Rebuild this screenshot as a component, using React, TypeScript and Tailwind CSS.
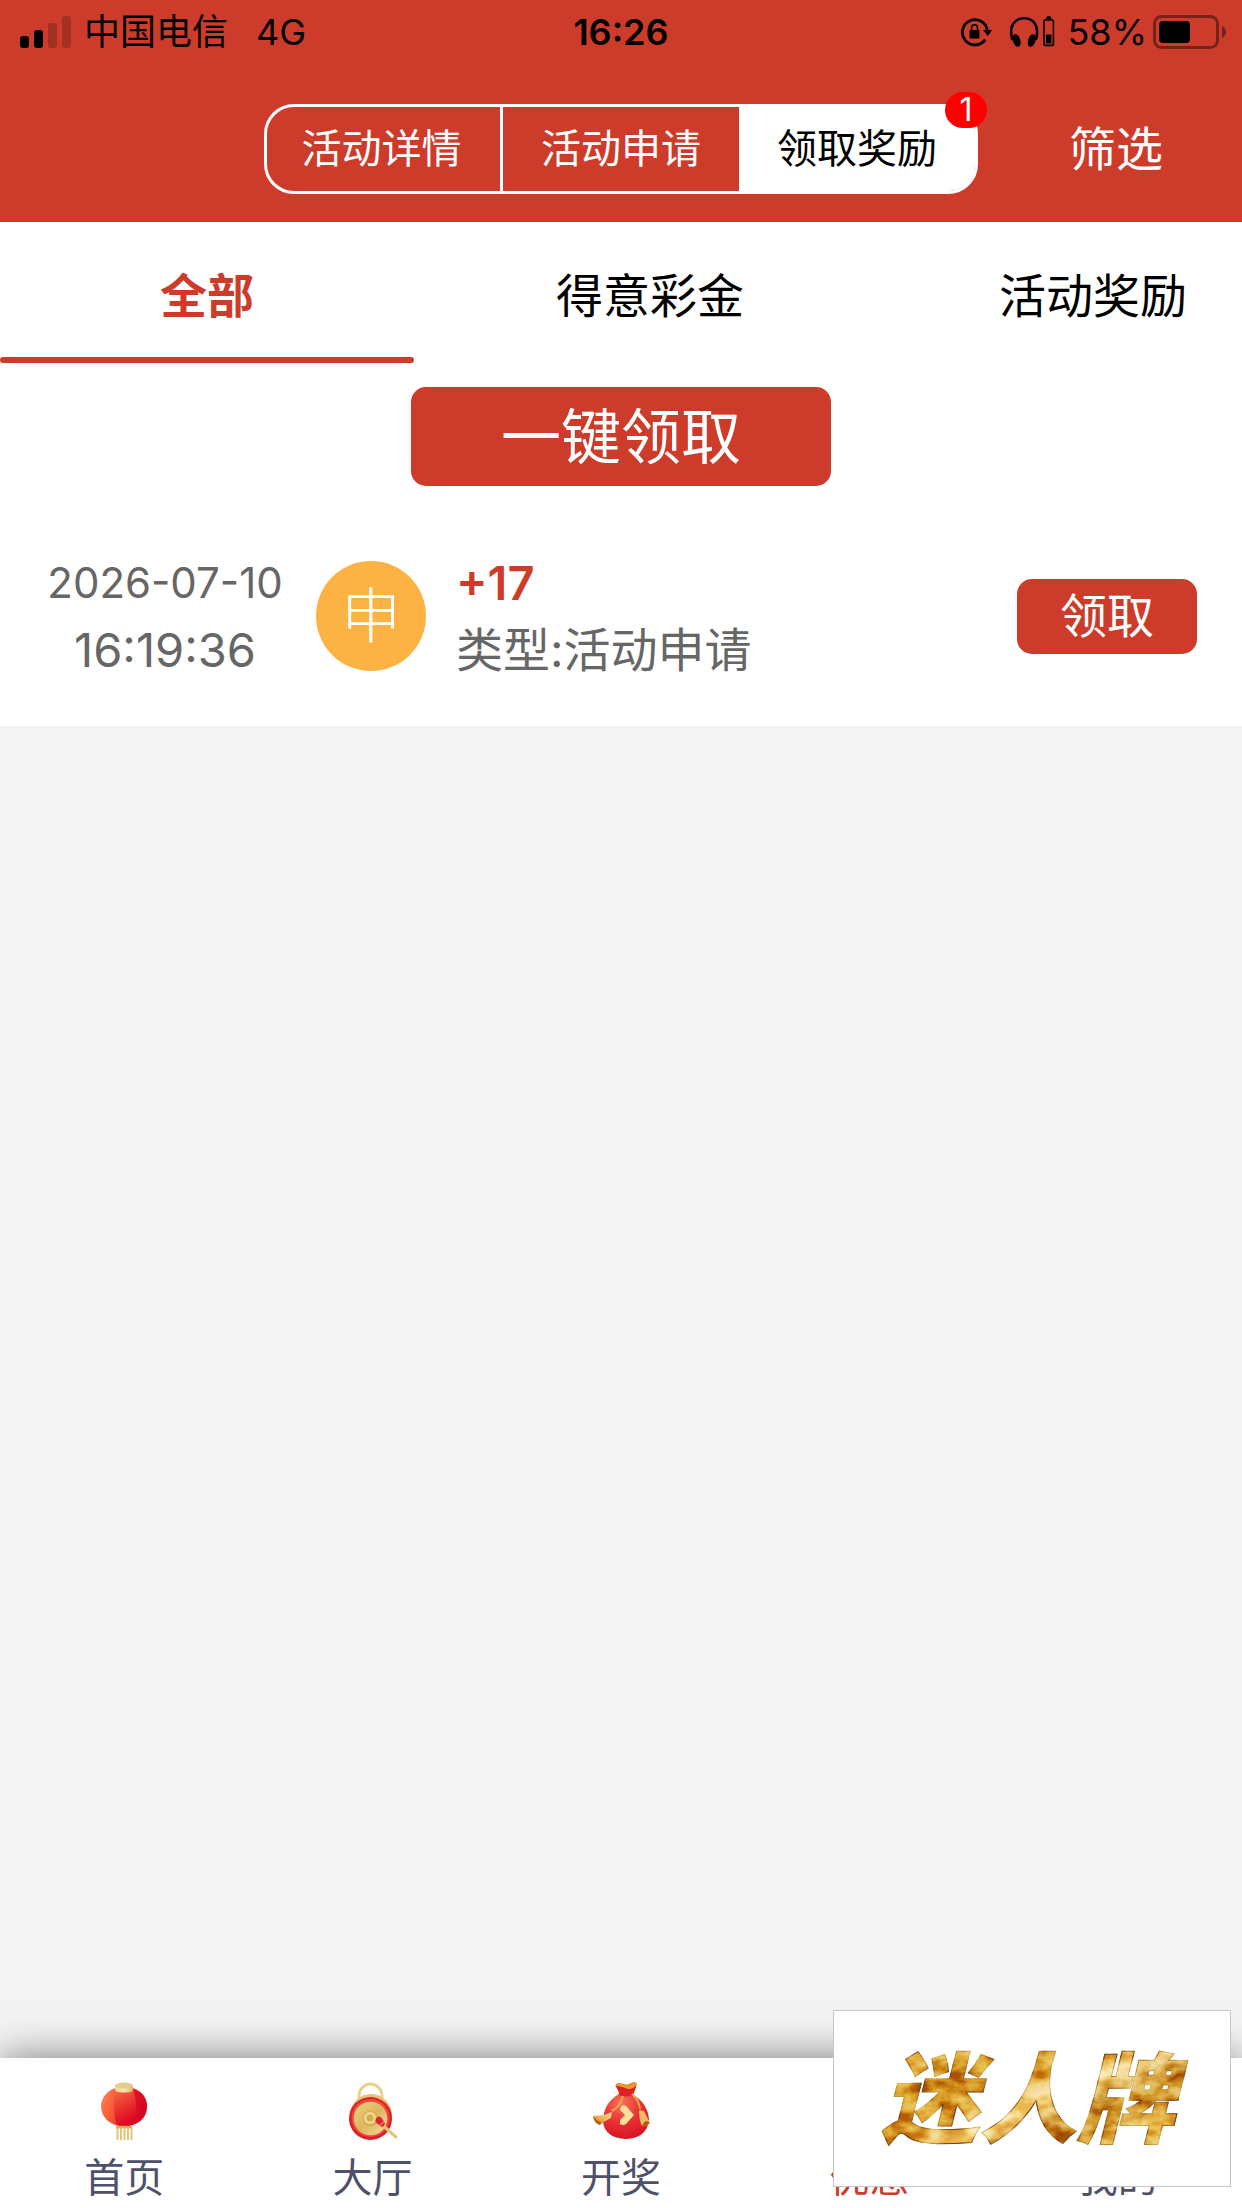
import type { ReactNode } from 'react';

const segments = [
  { label: '活动详情', active: false },
  { label: '活动申请', active: false },
  { label: '领取奖励', active: true, badge: 1 },
];

function SignalIcon() {
  return (
    <svg width="52" height="32" viewBox="0 0 52 32" aria-hidden="true">
      <rect x="0" y="20" width="9" height="12" rx="3" />
      <rect x="14" y="14" width="9" height="18" rx="3" />
      <rect x="28" y="7" width="9" height="25" rx="3" fillOpacity=".2" />
      <rect x="42" y="0" width="9" height="32" rx="3" fillOpacity=".2" />
    </svg>
  );
}

function RotationLockIcon() {
  return (
    <svg width="32" height="30" viewBox="0 0 32 30" aria-hidden="true">
      <path d="M25.2 22.6A12.6 12.6 0 1 1 27.3 13" fill="none" stroke="#000" strokeWidth="2.8" />
      <path d="M23 13h9l-4.2 6z" />
      <rect x="9.5" y="13" width="10" height="8.5" rx="1" />
      <path d="M11.5 14v-3a3 3.2 0 0 1 6 0v3" fill="none" stroke="#000" strokeWidth="1.6" />
    </svg>
  );
}

function HeadphonesIcon() {
  return (
    <svg width="45" height="32" viewBox="0 0 45 32" aria-hidden="true">
      <path d="M2.500 24C-2 10 5 2.300 14.200 2.300S30 10 25.800 24" fill="none" stroke="#000" strokeWidth="2.600" />
      <ellipse cx="6.600" cy="24.500" rx="3.700" ry="6.500" transform="rotate(-17 6.600 24.500)" />
      <ellipse cx="21.800" cy="24.500" rx="3.700" ry="6.500" transform="rotate(17 21.800 24.500)" />
      <path d="M36 3q0-3 2.700-3t2.700 3z" />
      <rect x="34" y="4" width="9.400" height="25.400" rx="1" fill="none" stroke="#000" strokeWidth="1.600" />
      <rect x="36" y="18.500" width="5.400" height="9" />
    </svg>
  );
}

function BatteryIcon() {
  return (
    <svg width="73" height="34" viewBox="0 0 73 34" aria-hidden="true">
      <rect x="1.500" y="1.500" width="63" height="31" rx="7" fill="none" stroke="#000" strokeOpacity=".42" strokeWidth="3" />
      <rect x="6" y="6" width="31" height="22" rx="4" />
      <path d="M69 11q4 2 4 6t-4 6z" fillOpacity=".42" />
    </svg>
  );
}

function LanternIcon() {
  return (
    <svg width="58" height="58" viewBox="0 0 58 58" aria-hidden="true">
      <defs>
        <linearGradient id="lanternBody" x1="0" y1="0" x2="1" y2=".3">
          <stop offset="0" stopColor="#ff8a56" />
          <stop offset=".4" stopColor="#fb5638" />
          <stop offset="1" stopColor="#d4001f" />
        </linearGradient>
        <linearGradient id="lanternMid" x1="0" y1="0" x2=".3" y2="1">
          <stop offset="0" stopColor="#f8703c" />
          <stop offset="1" stopColor="#df0826" />
        </linearGradient>
        <linearGradient id="lanternGold" x1="0" y1="0" x2="1" y2="0">
          <stop offset="0" stopColor="#efd48b" />
          <stop offset=".5" stopColor="#f7e7b4" />
          <stop offset="1" stopColor="#dcb865" />
        </linearGradient>
      </defs>
      <ellipse cx="29" cy="24.500" rx="23" ry="20" fill="url(#lanternBody)" />
      <path d="M21 6h16q4 6 4 18t-4 19H22q-3-7-3-19t2-18z" fill="url(#lanternMid)" />
      <path d="M38 7q3 8 3 17t-4 19q15-4 15-18.500T38 7z" fill="#d90923" fillOpacity=".6" />
      <path d="M20 3v5q0 2.500 9 2.500t9-2.500V3z" fill="url(#lanternGold)" />
      <ellipse cx="29" cy="3.500" rx="9" ry="3" fill="#e3cd8e" />
      <path d="M21 43.500q8 2 16 0v3H21z" fill="#d8ad5c" />
      <path d="M22.500 46v12M26 46v12M29.500 46v12M33 46v12M36.500 46v12" stroke="#e4c476" strokeWidth="2" />
    </svg>
  );
}

function GongIcon() {
  return (
    <svg width="58" height="58" viewBox="0 0 58 58" aria-hidden="true">
      <defs>
        <linearGradient id="gongGold" x1="0" y1="0" x2="1" y2="1">
          <stop offset="0" stopColor="#f0d689" />
          <stop offset=".5" stopColor="#dcb55d" />
          <stop offset="1" stopColor="#f3dfa0" />
        </linearGradient>
      </defs>
      <path d="M15 18V14a11.500 12 0 0 1 23 0v5" fill="none" stroke="#ead08a" strokeWidth="2.800" />
      <circle cx="27" cy="33" r="21" fill="#e6c373" />
      <ellipse cx="26.500" cy="36.500" rx="21.500" ry="21.500" fill="#de1f2b" />
      <circle cx="26.500" cy="36" r="19" fill="#f04a3c" />
      <circle cx="26.500" cy="36.500" r="16.800" fill="url(#gongGold)" />
      <circle cx="26.500" cy="36.500" r="8" fill="#d9b04f" />
      <circle cx="26" cy="36" r="6" fill="#efd98f" />
      <circle cx="26" cy="36" r="3.500" fill="#d5ab4c" />
      <path d="M36 41l16 14" stroke="#e6c675" strokeWidth="3" strokeLinecap="round" />
      <path d="M32 36.500q3-4 6 0l3 5q-1 4-4 3l-5-4q-1-2 0-4z" fill="#dc2530" />
      <path d="M36 43.500l4-4" stroke="#f3dfa0" strokeWidth="1" />
    </svg>
  );
}

function PouchIcon() {
  return (
    <svg width="58" height="58" viewBox="0 0 58 58" aria-hidden="true">
      <defs>
        <radialGradient id="pouchBody" cx=".4" cy=".2" r=".8">
          <stop offset="0" stopColor="#f6755a" />
          <stop offset=".5" stopColor="#e93535" />
          <stop offset="1" stopColor="#d81425" />
        </radialGradient>
        <linearGradient id="tassel" x1="1" y1="0" x2="0" y2="1">
          <stop offset="0" stopColor="#f9dc93" />
          <stop offset=".6" stopColor="#e9aa4a" />
          <stop offset="1" stopColor="#b55a05" />
        </linearGradient>
      </defs>
      <path d="M27 12q-16 9-16 28 2 16 23 17 21-1 23-19-1-17-17-26z" fill="url(#pouchBody)" />
      <path d="M27 13q0-4-3.500-9 1-4 7-2 5 2 9-1 4-2 5 1-1 7-4 11-7 3-13.500 0z" fill="#da2126" />
      <path d="M24 4q1-4 7-2 5 2 9-1 4-2 5 1-3 5-9 5-7-3-12-3z" fill="#ee9a2b" />
      <path d="M31 14q-3 11-11 15M40 12q7 6 8 15" fill="none" stroke="#efa54f" strokeWidth="2" />
      <path d="M20 30l-8 3-11 1q1 7 7 9 3-3 11-7z" fill="url(#tassel)" />
      <path d="M1 34q1 7 7 9l1-3q-5-1-8-6z" fill="#b45b08" />
      <path d="M47 28l5 1 6 12q-4 4-8 3-3-6-3-16z" fill="#f1bc66" />
      <path d="M50 44q4 1 8-3l-3-2q-3 0-5 5z" fill="#b95d0a" />
      <path d="M29 24q4-2 6 1l7 8-8 9q-3 2-6 0v-4l5-5-5-5z" fill="#fbe09a" />
    </svg>
  );
}

function NavItem({ label, icon, active = false }: { label: string; icon?: ReactNode; active?: boolean }) {
  return (
    <a
      href="#"
      className={`flex flex-col items-center gap-2.5 pt-6 ${active ? 'text-[#cd3c2a]' : 'text-[#4f5169]'}`}
    >
      <span className="flex h-[58px] items-center">{icon}</span>
      <span className="text-[40px] leading-[56px]">{label}</span>
    </a>
  );
}

export default function App() {
  return (
    <div className="relative flex min-h-screen flex-col overflow-hidden bg-[#f4f4f4] font-[Inter,'Noto_Sans_CJK_SC',sans-serif] text-black">
      <header className="bg-[#cd3c2a]">
        <div className="grid h-16 grid-cols-3 items-center px-5 text-[36px] leading-[44px]">
          <div className="flex items-center">
            <SignalIcon />
            <span className="ml-3">中国电信</span>
            <span className="ml-7">4G</span>
          </div>
          <div className="text-center font-semibold">16:26</div>
          <div className="-mr-1 flex items-center justify-end">
            <RotationLockIcon />
            <span className="ml-[18px]"><HeadphonesIcon /></span>
            <span className="ml-3 mr-1.5">58%</span>
            <BatteryIcon />
          </div>
        </div>
        <div className="grid h-[158px] grid-cols-[1fr_714px_1fr] items-center pt-3">
          <nav className="col-start-2 grid h-[90px] grid-cols-3 rounded-[30px] border-[3px] border-white">
            {segments.map((s, i) => (
              <button
                key={s.label}
                type="button"
                className={`relative text-[40px] leading-[56px] ${i === 0 ? 'border-r-[3px] border-white pr-1' : ''} ${s.active ? 'rounded-r-[26px] bg-white' : 'text-white'}`}
              >
                {s.label}
                {s.badge && (
                  <span className="absolute -right-3 -top-[15px] flex h-9 w-[42px] items-center justify-center rounded-full bg-[#ff0000] text-[32px] leading-9 text-white">
                    {s.badge}
                  </span>
                )}
              </button>
            ))}
          </nav>
          <button type="button" className="justify-self-center pl-3 text-[47px] leading-[64px] text-white">
            筛选
          </button>
        </div>
      </header>

      <section className="bg-white">
        <div className="flex h-[141px] overflow-hidden text-[47px]">
          <button type="button" className="relative w-1/3 shrink-0 pt-2 font-bold text-[#cd3c2a]">
            全部
            <span className="absolute inset-x-0 bottom-0 h-1.5 rounded-full bg-[#cd3c2a]" />
          </button>
          <button type="button" className="w-[38%] shrink-0 pt-2">得意彩金</button>
          <button type="button" className="w-1/3 shrink-0 pt-2">活动奖励</button>
        </div>

        <div className="flex justify-center pt-6">
          <button type="button" className="h-[99px] w-[420px] rounded-[15px] bg-[#cd3c2a] text-[60px] leading-[84px] text-white">
            一键领取
          </button>
        </div>

        <div className="mt-5 flex h-[220px] items-center pl-[46px] pr-[45px]">
          <div className="w-[238px] whitespace-nowrap text-center text-[#666]">
            <div className="text-[42px] leading-[67px]">2026-07-10</div>
            <div className="text-[47px] leading-[67px]">16:19:36</div>
          </div>
          <div className="ml-8 flex size-[110px] items-center justify-center rounded-full bg-[#fcb343] text-[60px] font-light leading-none text-white">
            申
          </div>
          <div className="ml-[30px] flex-1 text-[47px] leading-[67px]">
            <div className="font-semibold text-[#cd3c2a]">+17</div>
            <div className="text-[#666]">类型:活动申请</div>
          </div>
          <button type="button" className="h-[75px] w-[180px] rounded-[15px] bg-[#cd3c2a] text-[47px] leading-[64px] text-white">
            领取
          </button>
        </div>
      </section>

      <main className="flex-1" />

      <nav className="grid h-[150px] grid-cols-5 bg-white shadow-[0_0_40px_rgba(0,0,0,0.5)]">
        <NavItem label="首页" icon={<LanternIcon />} />
        <NavItem label="大厅" icon={<GongIcon />} />
        <NavItem label="开奖" icon={<PouchIcon />} />
        <NavItem label="优惠" active />
        <NavItem label="我的" />
      </nav>

      <aside className="absolute bottom-[21px] right-[11px] flex h-[177px] w-[398px] items-center justify-center border border-[#c6c6c6] bg-white">
        <svg width="380" height="170" viewBox="0 0 380 170" role="img" aria-label="迷人牌">
          <defs>
            <linearGradient id="gold" x1="0" y1="0" x2="1" y2="1">
              <stop offset="0" stopColor="#c48a1c" />
              <stop offset=".15" stopColor="#ecc05c" />
              <stop offset=".3" stopColor="#cd8e1c" />
              <stop offset=".45" stopColor="#dda436" />
              <stop offset=".55" stopColor="#f6dc98" />
              <stop offset=".68" stopColor="#c4841c" />
              <stop offset=".82" stopColor="#eac05a" />
              <stop offset="1" stopColor="#a87014" />
            </linearGradient>
            <filter id="foil" x="0" y="0" width="100%" height="100%" colorInterpolationFilters="sRGB">
              <feTurbulence type="fractalNoise" baseFrequency=".04 .06" numOctaves="4" seed="8" />
              <feColorMatrix values="2.600 0 0 0 -.72  2.600 0 0 0 -.76  2.600 0 0 0 -.84  0 0 0 0 1" result="tex" />
              <feBlend in="tex" in2="SourceGraphic" mode="soft-light" />
              <feComposite in2="SourceGraphic" operator="in" />
            </filter>
          </defs>
          <text
            x="186"
            y="121"
            textAnchor="middle"
            fill="url(#gold)"
            stroke="#b07a20"
            strokeWidth="1"
            filter="url(#foil)"
            className="font-['Noto_Sans_CJK_SC',sans-serif] text-[98px] font-black italic"
          >
            迷人牌
          </text>
        </svg>
      </aside>
    </div>
  );
}
